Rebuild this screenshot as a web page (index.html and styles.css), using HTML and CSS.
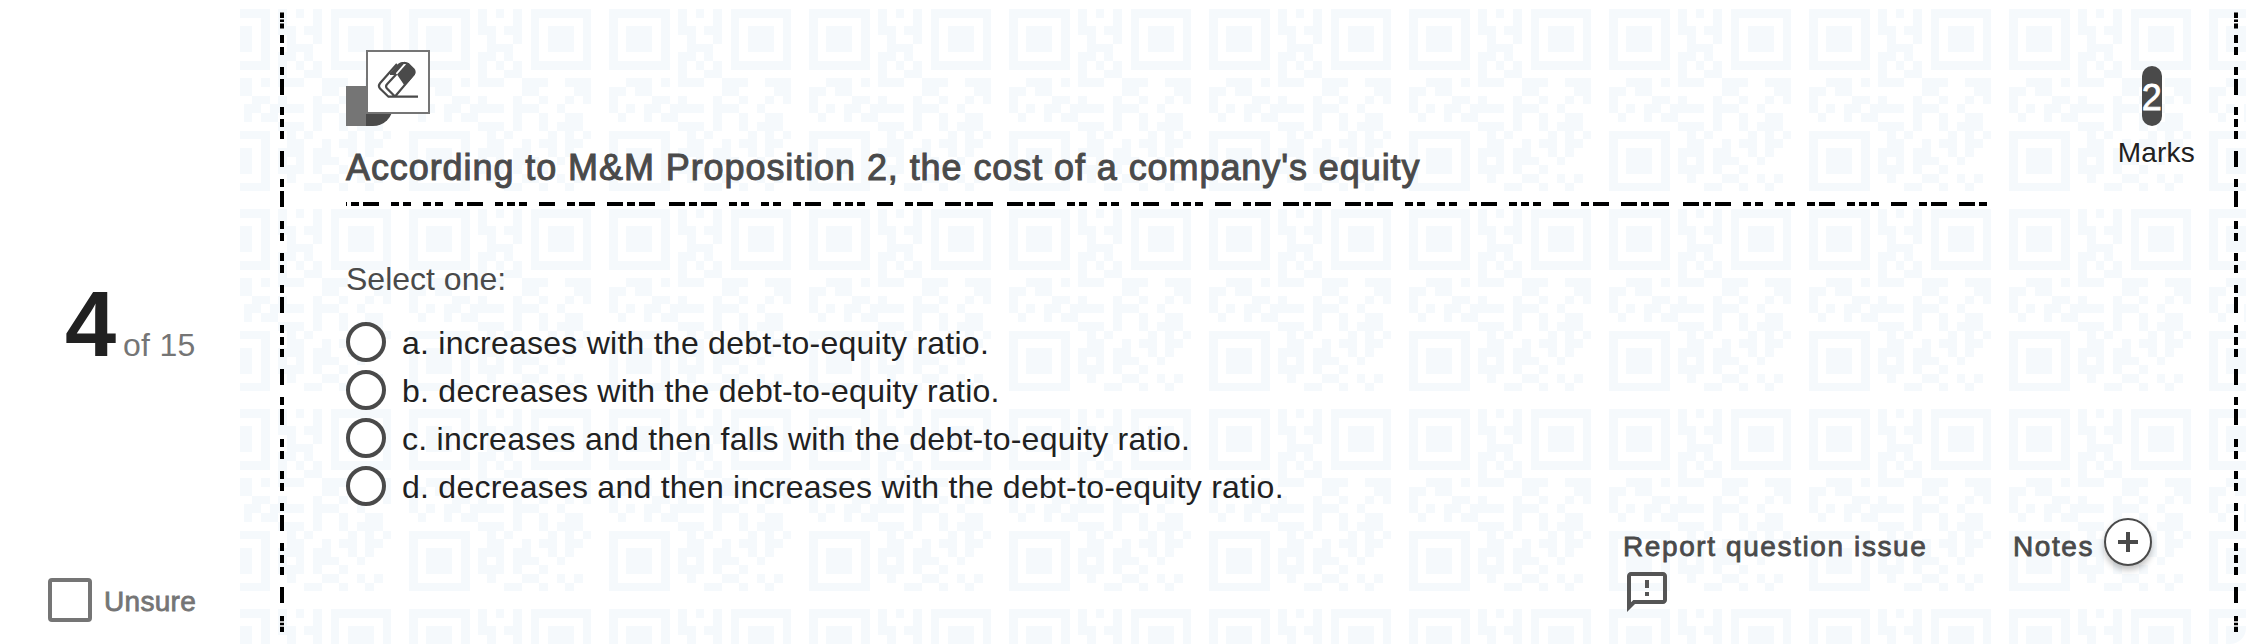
FILE: index.html
```
<!DOCTYPE html>
<html lang="en">
<head>
  <meta charset="UTF-8">
  <title>Question 4 of 15</title>
  <link rel="stylesheet" href="styles.css">
</head>
<body>
  <div class="question">
    <div class="side">
      <div class="count"><span class="current">4</span><span class="total">of 15</span></div>
      <label class="unsure"><span class="checkbox"></span><span class="unsure-text">Unsure</span></label>
    </div>

    <div class="card">
      <div class="dashes"><div class="cap"></div><div class="dash-line"></div><div class="cap cap-bottom"></div></div>

      <div class="content">
        <svg class="eraser" width="84" height="76" viewBox="0 0 84 76">
          <path d="M0 36h20v40H0z" fill="#757575"/>
          <path d="M20 36h27v20a20 20 0 0 1-20 20h-7z" fill="#4a4a4a"/>
          <rect x="21" y="1" width="62" height="62" fill="#fff" stroke="#757575" stroke-width="2"/>
          <path d="M43.300 24L52.500 13.500Q54.300 12 56 12h3.500L50 23zM51 24.500l10-11.300 6.900 6.500q2.500 2.500.6 5.300L58.800 36z" fill="#4a4a4a"/>
          <path d="M51 14L34 33.200q-2.200 2.600 0 5.300l8.500 8.200H72M58 12.800q2.800 0 4.500 1.400l5 5q2 2.500 0 5.500L49 46.500M50.500 24L41 34.200q-1.800 2-.2 4.100l8.200 8.200M44 24h6" fill="none" stroke="#4a4a4a" stroke-width="2.200"/>
        </svg>
        <h2>According to M&amp;M Proposition 2, the cost of a company's equity</h2>
        <div class="divider"></div>

        <p class="prompt">Select one:</p>
        <div class="answers">
          <label class="answer"><span class="radio"></span><span class="answer-text">a. increases with the debt-to-equity ratio.</span></label>
          <label class="answer"><span class="radio"></span><span class="answer-text">b. decreases with the debt-to-equity ratio.</span></label>
          <label class="answer"><span class="radio"></span><span class="answer-text">c. increases and then falls with the debt-to-equity ratio.</span></label>
          <label class="answer"><span class="radio"></span><span class="answer-text">d. decreases and then increases with the debt-to-equity ratio.</span></label>
        </div>
      </div>

      <div class="tools">
        <div class="marks">
          <div class="badge">2</div>
          <div class="marks-text">Marks</div>
        </div>
        <div class="actions">
          <div class="report">
            <span class="report-text">Report question issue</span>
            <svg width="48" height="48" viewBox="0 0 24 24" fill="#555">
              <path d="M20 2H4c-1.100 0-2 .9-2 2v18l4-4h14c1.100 0 2-.9 2-2V4c0-1.100-.9-2-2-2zm0 14H5.170L4 17.170V4h16v12zM11 12h2v2h-2zm0-6h2v4h-2z"/>
            </svg>
          </div>
          <div class="notes">
            <span class="notes-text">Notes</span>
            <span class="add">
              <svg width="20" height="20" viewBox="0 0 20 20"><path d="M10 0v20M0 10h20" stroke="#4a4a4a" stroke-width="4"/></svg>
            </span>
          </div>
        </div>
      </div>

      <div class="dashes"><div class="cap"></div><div class="dash-line"></div><div class="cap cap-bottom"></div></div>
    </div>
  </div>
</body>
</html>
```
FILE: styles.css
```
* {
  box-sizing: border-box;
}

body {
  font-family: "Liberation Sans", Arial, sans-serif;
  margin: 0;
  background: #fff;
  color: #212121;
}

.question {
  display: flex;
  height: 644px;
  overflow: hidden;
}

/* left column */
.side {
  width: 240px;
  display: flex;
  flex-direction: column;
  justify-content: space-between;
  padding: 272px 0 22px 48px;
}

.count {
  display: flex;
  align-items: baseline;
  padding-left: 17px;
  line-height: 104px;
}

.current {
  font-size: 92px;
  font-weight: bold;
  width: 57px;
}

.total {
  font-size: 32px;
  letter-spacing: 0.3px;
  padding-left: 1px;
  color: #757575;
}

.unsure {
  display: flex;
  align-items: center;
  gap: 12px;
  color: #757575;
  font-size: 28px;
  letter-spacing: 0.3px;
  -webkit-text-stroke: 0.8px #757575;
}

.unsure-text {
  padding-top: 4px;
}

.checkbox {
  width: 44px;
  height: 44px;
  border: 4px solid #757575;
  border-radius: 4px;
  background: #fff;
}

/* card with the pixel pattern */
.card {
  flex: 1;
  display: flex;
  padding: 0 8px 0 40px;
  border-bottom-right-radius: 16px;
  background-position: -31.33px 8.67px;
  background-size: 200px 200px;
  background-image: url("data:image/svg+xml,%3Csvg xmlns='http://www.w3.org/2000/svg' width='200' height='200' viewBox='0 0 23.04 23.04'%3E%3Cpath shape-rendering='crispEdges' stroke='%23f5f9fc' d='M0 .5h7m1 0h1m1 0h1m1 0h1m1 0h7M0 1.500h1m5 0h1m1 0h1m3 0h1m1 0h1m5 0h1M0 2.500h1m1 0h3m1 0h1m1 0h2m1 0h2m1 0h1m1 0h3m1 0h1M0 3.500h1m1 0h3m1 0h1m2 0h1m2 0h1m1 0h1m1 0h3m1 0h1M0 4.500h1m1 0h3m1 0h1m2 0h3m2 0h1m1 0h3m1 0h1M0 5.500h1m5 0h1m1 0h2m1 0h1m2 0h1m5 0h1M0 6.500h7m1 0h1m1 0h1m1 0h1m1 0h7M8 7.500h1m2 0h2M2 8.500h3m1 0h1m1 0h3m2 0h3m2 0h3M0 9.500h2m1 0h2m8 0h2m4 0h2M0 10.500h1m4 0h2m1 0h1m3 0h1m2 0h1m2 0h1m1 0h1M0 11.500h1m1 0h1m1 0h2m1 0h4m1 0h3m2 0h1M1 12.500h1m2 0h1m1 0h2m4 0h1m2 0h1m2 0h2M8 13.500h3m1 0h1m2 0h1m1 0h3M0 14.500h7m2 0h1m1 0h1m4 0h1m1 0h1m1 0h1M0 15.500h1m5 0h1m2 0h2m2 0h1m1 0h2m1 0h2M0 16.500h1m1 0h3m1 0h1m1 0h3m1 0h2m2 0h1m1 0h1M0 17.500h1m1 0h3m1 0h1m1 0h1m1 0h1m1 0h3m2 0h1M0 18.500h1m1 0h3m1 0h1m1 0h3m1 0h1m2 0h1M0 19.500h1m5 0h1m2 0h1m3 0h2m2 0h1m1 0h1M0 20.500h7m4 0h2m2 0h1m2 0h1'/%3E%3C/svg%3E");
}

/* left and right dashed rails */
.dashes {
  width: 4px;
  padding: 12px 0;
  display: flex;
  flex-direction: column;
}

.cap {
  height: 17px;
  background: linear-gradient(#777 1px, #000 1px 6px, transparent 6px 7px, #777 7px 8px, #000 8px 10px, transparent 10px 11px, #777 11px 12px, #000 12px 16px, #777 16px);
}

.cap-bottom {
  height: 16px;
  background: linear-gradient(#000 5px, #bbb 5px 7px, #000 7px 9px, #bbb 9px 11px, #000 11px);
}

.dash-line {
  flex: 1;
  margin: 6px 0 13px;
  background-position: 0 -32px;
  background-image: url("data:image/svg+xml,%3Csvg xmlns='http://www.w3.org/2000/svg' width='4' height='218'%3E%3Cpath stroke='%23000' stroke-width='4' d='M2 0v8m0 4v8m0 12v8m0 4v8m0 12v8m0 4v16m0 12v8m0 4v8m0 4v8m0 12v16m0 12v8m0 4v16'/%3E%3C/svg%3E");
}

.content {
  width: 1706px;
  padding: 50px 0 0 62px;
}

.eraser {
  display: block;
}

h2 {
  margin: 20px 0 0;
  height: 56px;
  line-height: 44px;
  font-size: 36px;
  font-weight: normal;
  letter-spacing: 0.92px;
  color: #4a4a4a;
  white-space: nowrap;
  -webkit-text-stroke: 1px #4a4a4a;
}

.divider {
  height: 4px;
  width: 1642px;
  background-position: -15px 0;
  background-image: url("data:image/svg+xml,%3Csvg xmlns='http://www.w3.org/2000/svg' width='338' height='4'%3E%3Cpath stroke='%23000' stroke-width='4' d='M0 2h16m4 0h8m4 0h16m12 0h8m4 0h8m12 0h8m4 0h8m12 0h8m4 0h16m12 0h8m4 0h8m4 0h8m12 0h16m12 0h8m4 0h16m12 0h16m4 0h8m4 0h16'/%3E%3C/svg%3E");
}

.prompt {
  margin: 53px 0 0;
  font-size: 32px;
  line-height: 40px;
  color: #4a4a4a;
}

.answers {
  margin-top: 23px;
}

.answer {
  display: flex;
  gap: 16px;
  height: 48px;
  font-size: 32px;
  line-height: 42px;
  letter-spacing: 0.25px;
  white-space: nowrap;
}

.radio {
  width: 40px;
  height: 40px;
  border: 4px solid #4a4a4a;
  border-radius: 50%;
  background: #fff;
}

/* marks, report and notes */
.tools {
  flex: 1;
  display: flex;
  flex-direction: column;
  justify-content: space-between;
  padding: 66px 39px 28px 0;
}

.marks {
  align-self: flex-end;
  display: flex;
  flex-direction: column;
  align-items: flex-start;
}

.badge {
  width: 20px;
  height: 60px;
  margin-left: 24px;
  border-radius: 10px;
  background: #4a4a4a;
  color: #fff;
  font-size: 36px;
  line-height: 63px;
  display: flex;
  justify-content: center;
  -webkit-text-stroke: 0.8px #fff;
}

.marks-text {
  margin-top: 11px;
  font-size: 28px;
  line-height: 32px;
  letter-spacing: 0.2px;
}

.actions {
  display: flex;
  justify-content: flex-end;
  margin-left: -400px;
  padding-right: 43px;
  height: 98px;
  font-size: 28px;
  color: #4a4a4a;
  white-space: nowrap;
  -webkit-text-stroke: 0.8px #4a4a4a;
}

.report {
  width: 390px;
  line-height: 50px;
  padding-top: 4px;
}

.report svg {
  display: block;
  margin-top: -4px;
  -webkit-text-stroke: 0;
}

.report-text,
.notes-text {
  letter-spacing: 1.6px;
}

.notes {
  display: flex;
  width: 139px;
  justify-content: space-between;
  line-height: 58px;
}

.add {
  width: 48px;
  height: 48px;
  display: flex;
  align-items: center;
  justify-content: center;
  border: 2px solid #4a4a4a;
  border-radius: 50%;
  background: #fff;
  box-shadow: 0 4px 6px rgba(0, 0, 0, 0.25);
}
```
